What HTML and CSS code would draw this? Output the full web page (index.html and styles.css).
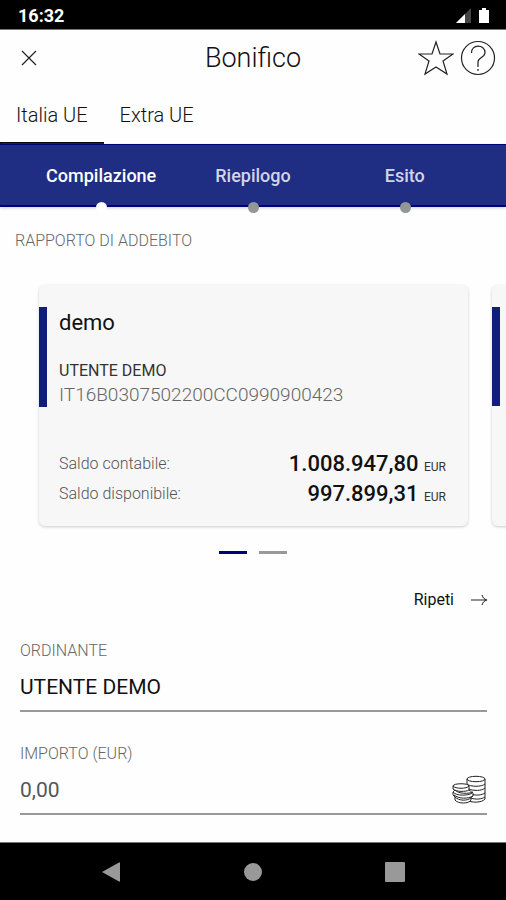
FILE: index.html
```html
<!DOCTYPE html>
<html lang="it">
<head>
<meta charset="utf-8">
<meta name="viewport" content="width=device-width, initial-scale=1">
<title>Bonifico</title>
<link rel="stylesheet" href="styles.css">
</head>
<body>
<div class="status">
  <span>16:32</span>
  <svg class="status-icons" viewBox="0 0 36 18" width="36" height="18" aria-hidden="true">
    <path d="M0 16 15 1V16Z" fill="#444"/>
    <path d="M0 16 9 7V16Z" fill="#fff"/>
    <path d="M23 3h3V1h4v2h3v13H23Z" fill="#fff"/>
  </svg>
</div>

<header class="header">
  <button class="icon-button" aria-label="Chiudi">
    <svg viewBox="0 0 18 18" width="18" height="18"><path d="M2 2 16 16M16 2 2 16"/></svg>
  </button>
  <h1>Bonifico</h1>
  <div class="actions">
    <button class="icon-button" aria-label="Preferiti">
      <svg viewBox="0 0 36 36" width="36" height="36"><path d="M18 2 22 14H35L25 21 29 34 18 27 7 34 11 21 1 14H14Z"/></svg>
    </button>
    <button class="icon-button" aria-label="Aiuto">
      <svg viewBox="0 0 36 36" width="36" height="36"><circle cx="18" cy="18" r="16.5"/><path d="M11.500 13C11 4 25 4 25 12.500C25 18 18 17 18 22V27M18 29V31"/></svg>
    </button>
  </div>
</header>

<nav class="tabs">
  <a class="tab active" href="#italia">Italia UE</a>
  <a class="tab" href="#extra">Extra UE</a>
</nav>

<ol class="steps">
  <li class="step current">Compilazione</li>
  <li class="step">Riepilogo</li>
  <li class="step">Esito</li>
</ol>

<main>
  <h2 class="caption">RAPPORTO DI ADDEBITO</h2>
  <div class="carousel">
    <article class="card">
      <div class="account">
        <h3>demo</h3>
        <p class="owner">UTENTE DEMO</p>
        <p class="iban">IT16B0307502200CC0990900423</p>
      </div>
      <dl class="balances">
        <div class="balance"><dt>Saldo contabile:</dt><dd>1.008.947,80 <small>EUR</small></dd></div>
        <div class="balance"><dt>Saldo disponibile:</dt><dd>997.899,31 <small>EUR</small></dd></div>
      </dl>
    </article>
    <article class="card"><div class="account"></div></article>
  </div>
  <div class="pager"><span class="page current"></span><span class="page"></span></div>

  <div class="repeat-row">
    <button class="repeat">Ripeti
      <svg viewBox="0 0 18 12" width="18" height="12" aria-hidden="true"><path d="M1 6H16M12 1C13 4 14 5 17 6C14 7 13 8 12 11"/></svg>
    </button>
  </div>

  <form class="form">
    <div class="field">
      <label for="ordinante">ORDINANTE</label>
      <div class="control"><input id="ordinante" type="text" value="UTENTE DEMO"></div>
    </div>
    <div class="field">
      <label for="importo">IMPORTO (EUR)</label>
      <div class="control">
        <input id="importo" type="text" inputmode="decimal" placeholder="0,00">
        <svg class="coins" viewBox="0 0 36 30" width="36" height="30" aria-hidden="true">
          <path d="M16 4V25C20 28 31 28 34 24V4"/>
          <ellipse cx="25" cy="4" rx="9" ry="2.7"/>
          <path d="M16 9C19 12 31 12 34 9M18 14C22 16 31 16 34 13M20 19C25 21 31 20 34 18M20 23C25 25 31 24 34 22"/>
          <path class="front" d="M2 11C2 8 18 8 18 11V15L22 18V21L20 22V25C18 29 7 29 4 25V22L2 20V17L4 15L2 14Z"/>
          <path d="M2 11C4 14 16 14 18 11M2 14C5 17 15 17 18 15M4 15C7 19 18 19 22 17M2 17C5 21 17 21 21 18M3 20C8 24 17 24 22 21M4 22C8 26 16 26 20 23"/>
        </svg>
      </div>
    </div>
  </form>
</main>

<nav class="system" aria-label="Sistema">
  <button class="icon-button" aria-label="Indietro"><svg viewBox="0 0 20 22" width="20" height="22"><path d="M1 11 18 1.500Q19 1 19 2V20Q19 21 18 20.500Z"/></svg></button>
  <button class="icon-button" aria-label="Home"><svg viewBox="0 0 20 20" width="20" height="20"><circle cx="10" cy="10" r="9"/></svg></button>
  <button class="icon-button" aria-label="Recenti"><svg viewBox="0 0 20 20" width="20" height="20"><rect width="20" height="20" rx="1"/></svg></button>
</nav>
</body>
</html>
```
FILE: styles.css
```css
* {
  box-sizing: border-box;
  margin: 0;
  padding: 0;
}

body {
  min-height: 100vh;
  display: flex;
  flex-direction: column;
  overflow-x: hidden;
  background: #fefefe;
  color: #111;
  font-family: Roboto, "Liberation Sans", sans-serif;
}

button,
input {
  border: 0;
  background: none;
  color: inherit;
  font: inherit;
}

svg {
  display: block;
}

.status {
  display: flex;
  align-items: center;
  justify-content: space-between;
  height: 30px;
  padding: 2px 14px 0 18px;
  border-bottom: 1px solid #777;
  background: #000;
  color: #fff;
  font-size: 18px;
  font-weight: 700;
}

.header {
  display: grid;
  grid-template-columns: 1fr auto 1fr;
  align-items: center;
  height: 56px;
  padding: 0 10px;
}

.header svg {
  fill: none;
  stroke: #222;
  stroke-width: 1.2;
}

.header > .icon-button {
  justify-self: start;
  padding: 10px;
}

h1 {
  font-size: 27px;
  font-weight: 300;
}

.actions {
  display: flex;
  justify-content: flex-end;
  gap: 6px;
}

.tabs {
  display: flex;
  height: 58px;
}

.tab {
  padding: 0 16px;
  border-bottom: 2px solid transparent;
  color: #111;
  font-size: 20px;
  font-weight: 300;
  line-height: 58px;
  text-decoration: none;
}

.tab.active {
  border-bottom-color: #000;
}

.steps {
  display: grid;
  grid-template-columns: repeat(3, 1fr);
  height: 63px;
  padding: 0 5%;
  border-top: 1px solid #00007a;
  border-bottom: 2px solid #00007a;
  background: #1f2d83;
  box-shadow: 0 1px 3px #ccc;
  list-style: none;
}

.step {
  position: relative;
  color: #d2d5e6;
  font-size: 18px;
  font-weight: 500;
  line-height: 62px;
  text-align: center;
}

.step::after {
  content: "";
  position: absolute;
  bottom: -6px;
  left: calc(50% - 5px);
  width: 11px;
  height: 11px;
  border-radius: 50%;
  background: #929895;
}

.step.current {
  color: #fff;
}

.step.current::after {
  background: #fff;
}

.caption {
  padding: 24px 15px 0;
  color: #666;
  font-size: 16px;
  font-weight: 300;
  line-height: 20px;
}

.carousel {
  display: flex;
  gap: 24px;
  overflow: hidden;
  padding: 34px 38px 4px 39px;
}

.card {
  flex: 0 0 100%;
  min-height: 241px;
  padding-top: 22px;
  border-radius: 6px;
  background: #f7f7f7;
  box-shadow: 0 1px 3px #ccc;
}

.account {
  min-height: 99px;
  padding: 2px 12px 0;
  border-left: 8px solid #101d7c;
}

h3 {
  margin-bottom: 22px;
  font-size: 22px;
  font-weight: 400;
  line-height: 28px;
}

.owner {
  color: #333;
  font-size: 16px;
  font-weight: 400;
  line-height: 24px;
}

.iban {
  color: #666;
  font-size: 19px;
  font-weight: 300;
  line-height: 24px;
}

.balances {
  padding: 41px 22px 0 20px;
}

.balance {
  display: flex;
  align-items: center;
  justify-content: space-between;
  height: 30px;
}

dt {
  color: #555;
  font-size: 16px;
  font-weight: 300;
}

dd {
  font-size: 22px;
  font-weight: 500;
}

small {
  color: #333;
  font-size: 12px;
  font-weight: 400;
}

.pager {
  display: flex;
  justify-content: center;
  gap: 12px;
  padding: 21px 0 20px;
}

.page {
  width: 28px;
  height: 3px;
  background: #999;
}

.page.current {
  background: #00007a;
}

.repeat-row {
  display: flex;
  justify-content: flex-end;
  padding: 14px 18px 0;
}

.repeat {
  display: flex;
  align-items: center;
  gap: 16px;
  font-size: 16px;
  line-height: 24px;
}

.repeat svg {
  fill: none;
  stroke: #222;
}

.form {
  display: grid;
  gap: 32px;
  padding: 29px 19px 24px 20px;
}

.field label {
  display: block;
  color: #666;
  font-size: 16px;
  font-weight: 300;
  line-height: 20px;
}

.control {
  display: flex;
  align-items: center;
  height: 51px;
  padding-top: 2px;
  border-bottom: 2px solid #999;
}

.control input {
  flex: 1;
  min-width: 0;
  height: 48px;
  outline: 0;
  font-size: 21px;
}

.control input::placeholder {
  color: #555;
}

.coins {
  fill: #fff;
  stroke: #222;
}

.system {
  display: grid;
  grid-template-columns: repeat(3, 28%);
  justify-content: center;
  height: 58px;
  margin-top: auto;
  border-top: 1px solid #777;
  background: #000;
}

.system .icon-button {
  display: grid;
  place-items: center;
}

.system svg {
  fill: #999;
}
```
